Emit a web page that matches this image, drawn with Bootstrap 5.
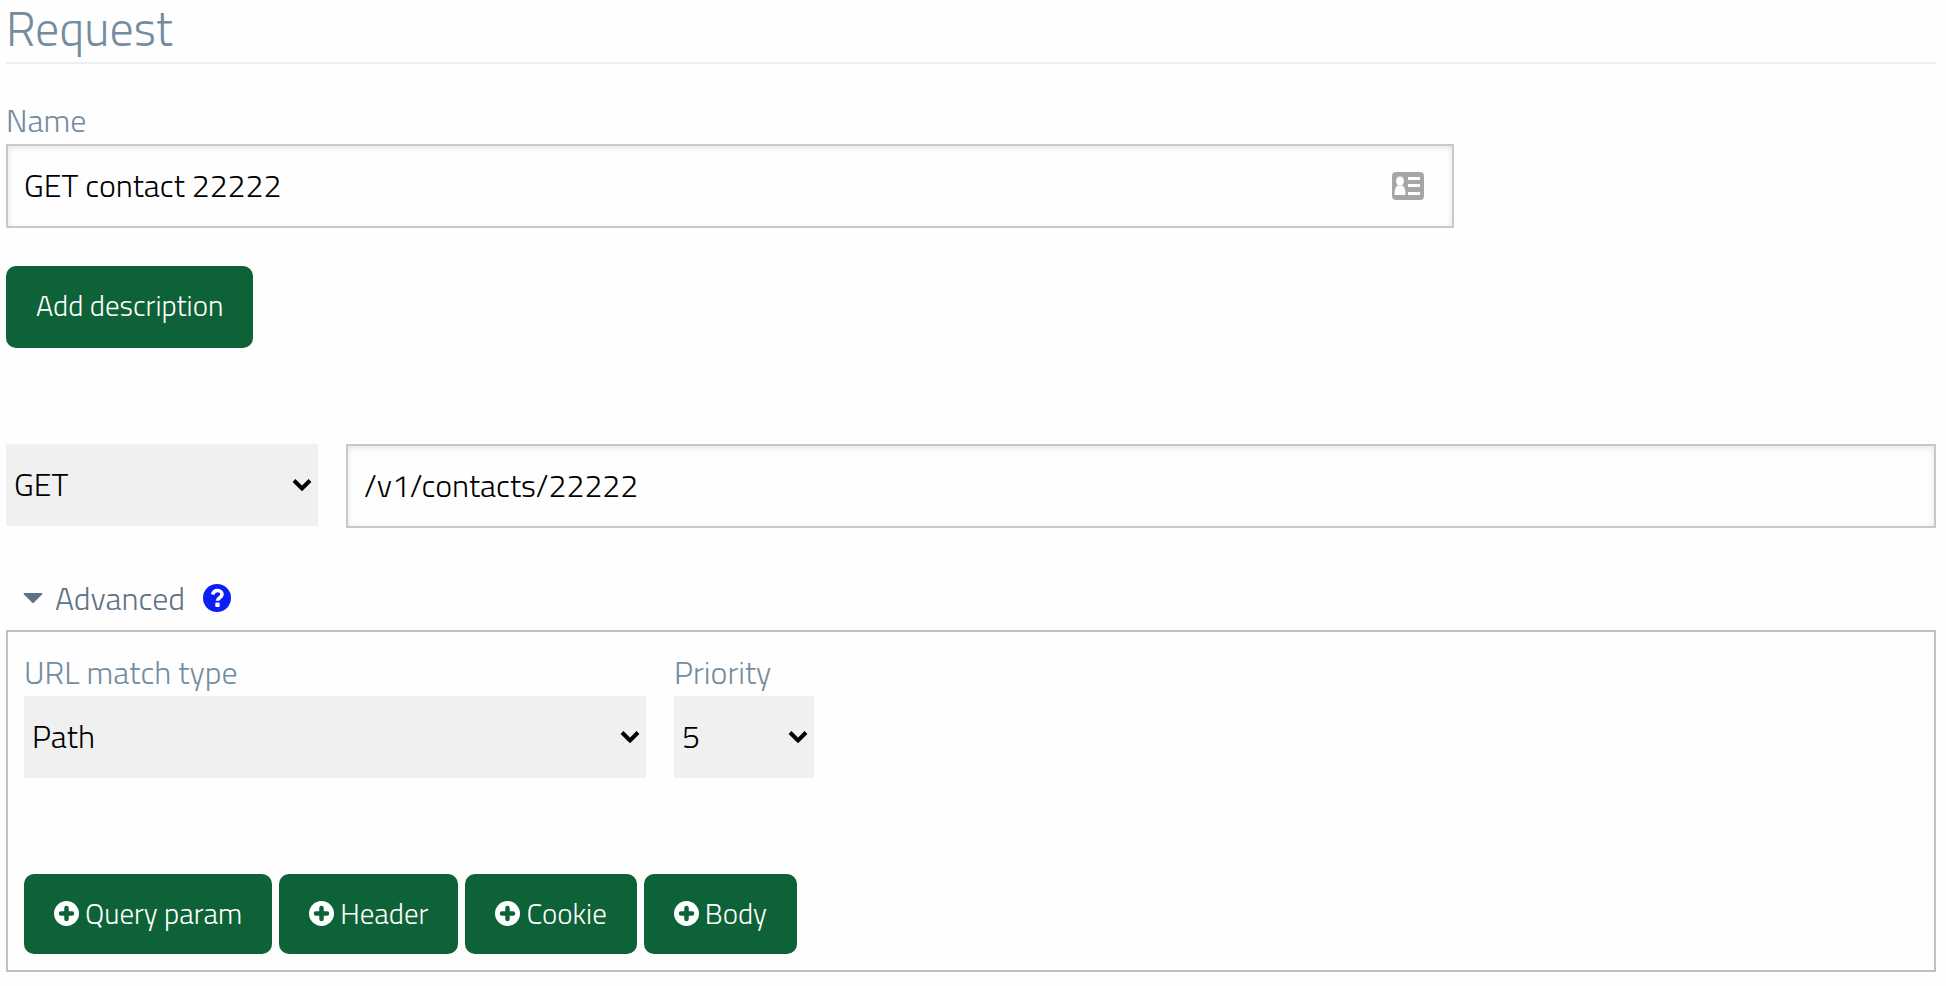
<!DOCTYPE html>
<html lang="en">
<head>
<meta charset="utf-8">
<meta name="viewport" content="width=device-width, initial-scale=1">
<title>Request</title>
<link href="https://cdn.jsdelivr.net/npm/bootstrap@5.3.0/dist/css/bootstrap.min.css" rel="stylesheet">
<style>
  body { font-family: "Titillium Web", Roboto, sans-serif; font-weight: 300; font-size: 32px; line-height: 46px; color: #000; background: #fefefe; }
  .request-page { padding: 0 10px 14px 6px; }
  .page-title { font-size: 48px; font-weight: 300; line-height: 58px; color: #748ca0; padding-bottom: 4px; border-bottom: 2px solid #eee; margin-bottom: 34px; }
  .form-label { color: #748ca0; margin: 0; padding-bottom: 2px; line-height: 44px; display: block; }
  .form-control, .form-control:focus { height: 84px; border: 2px solid #c8c8c8; border-radius: 0; padding: 0 16px 2px; font-size: 32px; font-weight: 300; color: #000; background: #fefefe; box-shadow: inset 0 2px 6px rgba(0, 0, 0, .1); }
  .form-select { height: 82px; border: 0; border-radius: 0; padding: 0 40px 2px 8px; font-size: 32px; font-weight: 300; color: #000; background-color: #f0f0f0; background-size: 20px 14px; background-position: right 6px center;
    background-image: url("data:image/svg+xml,%3Csvg xmlns='http://www.w3.org/2000/svg' viewBox='0 0 20 14'%3E%3Cpath d='M2 2.5l8 8 8-8' fill='none' stroke='%23000' stroke-width='4'/%3E%3C/svg%3E"); }
  .name-field { width: 75%; }
  .contact-icon { right: 30px; top: 28px; }
  .btn-action { --bs-btn-color: #fff; --bs-btn-bg: #0e6237; --bs-btn-hover-color: #fff; --bs-btn-hover-bg: #0a4f2c; --bs-btn-active-color: #fff; --bs-btn-active-bg: #0a4f2c; --bs-btn-padding-x: 30px; --bs-btn-padding-y: 0; --bs-btn-border-width: 0; --bs-btn-border-radius: 10px; --bs-btn-font-size: 29px; --bs-btn-font-weight: 300; --bs-btn-line-height: 78px; padding-bottom: 2px; }
  .btn-tall { margin: 38px 0 96px; padding-bottom: 4px; }
  .url-row { gap: 28px; }
  .method-select { width: 312px; flex: none; }
  .advanced-row { margin-top: 40px; height: 62px; padding: 0 0 2px 17px; gap: 18px; }
  .advanced-toggle { color: #5f7387; gap: 12px; }
  .advanced-panel { border: 2px solid #c0c0c0; padding: 18px 16px 16px; }
  .match-row { gap: 28px; margin-bottom: 96px; }
  .match-field { width: 622px; }
  .priority-field { width: 140px; }
  .action-row { gap: 7px; }
  .action-row .btn { gap: 6px; }
</style>
</head>
<body>
<main class="request-page">
  <h1 class="page-title">Request</h1>

  <form>
    <label class="form-label" for="name">Name</label>
    <div class="name-field position-relative">
      <input class="form-control" id="name" type="text" value="GET contact 22222">
      <svg class="contact-icon position-absolute" width="32" height="28" viewBox="0 0 32 28" aria-hidden="true">
        <rect width="32" height="28" rx="4" fill="#a6a6a6"/>
        <g fill="#fefefe"><ellipse cx="8" cy="9" rx="4" ry="4.500"/><path d="M2.500 23c0-6 1.500-9 3.500-9.500h4c2 .5 3.500 3.500 3.500 9.500z"/><path d="M16 5h12v3H16zM16 12h12v3H16zM16 20h12v3H16z"/></g>
      </svg>
    </div>

    <button type="button" class="btn btn-action btn-tall d-block">Add description</button>

    <div class="url-row d-flex align-items-start">
      <select class="form-select method-select" aria-label="Method"><option>GET</option><option>POST</option></select>
      <input class="form-control" type="text" aria-label="URL" value="/v1/contacts/22222">
    </div>

    <div class="advanced-row d-flex align-items-center">
      <button type="button" class="advanced-toggle border-0 bg-transparent p-0 d-flex align-items-center fw-light" aria-expanded="true">
        <svg width="20" height="12" viewBox="0 0 20 12" aria-hidden="true"><path d="M1 1h18q1 0 0 1.500l-8 8q-1 1-2 0l-8-8Q0 1 1 1z" fill="currentColor"/></svg>
        Advanced
      </button>
      <a href="#help" class="d-flex" aria-label="Help">
        <svg width="28" height="28" viewBox="0 0 28 28" aria-hidden="true"><circle cx="14" cy="14" r="14" fill="#0b1ef5"/><path d="M9.500 10.500C10.500 7.500 12.500 6.500 14.500 6.500c3 0 4.500 1.900 4.500 4 0 3.300-4.500 3.300-4.500 6.300" fill="none" stroke="#fff" stroke-width="3.600"/><rect x="12.300" y="18.600" width="4.400" height="4.400" rx="1" fill="#fff"/></svg>
      </a>
    </div>

    <section class="advanced-panel">
      <div class="match-row d-flex flex-wrap">
        <div class="match-field">
          <label class="form-label" for="match">URL match type</label>
          <select class="form-select" id="match"><option>Path</option><option>Path and query</option></select>
        </div>
        <div class="priority-field">
          <label class="form-label" for="priority">Priority</label>
          <select class="form-select" id="priority"><option>5</option><option>4</option></select>
        </div>
      </div>
      <svg class="d-none" aria-hidden="true"><symbol id="plus" viewBox="0 0 25 25"><circle cx="12.500" cy="12.500" r="12.500" fill="#fff"/><path d="M12.500 7v11M7 12.500h11" fill="none" stroke="#0e6237" stroke-width="4.500" stroke-linecap="round"/></symbol></svg>
      <div class="action-row d-flex flex-wrap">
        <button type="button" class="btn btn-action d-flex align-items-center"><svg width="25" height="25" aria-hidden="true"><use href="#plus"/></svg>Query param</button>
        <button type="button" class="btn btn-action d-flex align-items-center"><svg width="25" height="25" aria-hidden="true"><use href="#plus"/></svg>Header</button>
        <button type="button" class="btn btn-action d-flex align-items-center"><svg width="25" height="25" aria-hidden="true"><use href="#plus"/></svg>Cookie</button>
        <button type="button" class="btn btn-action d-flex align-items-center"><svg width="25" height="25" aria-hidden="true"><use href="#plus"/></svg>Body</button>
      </div>
    </section>
  </form>
</main>
<script src="https://cdn.jsdelivr.net/npm/bootstrap@5.3.0/dist/js/bootstrap.bundle.min.js"></script>
</body>
</html>
